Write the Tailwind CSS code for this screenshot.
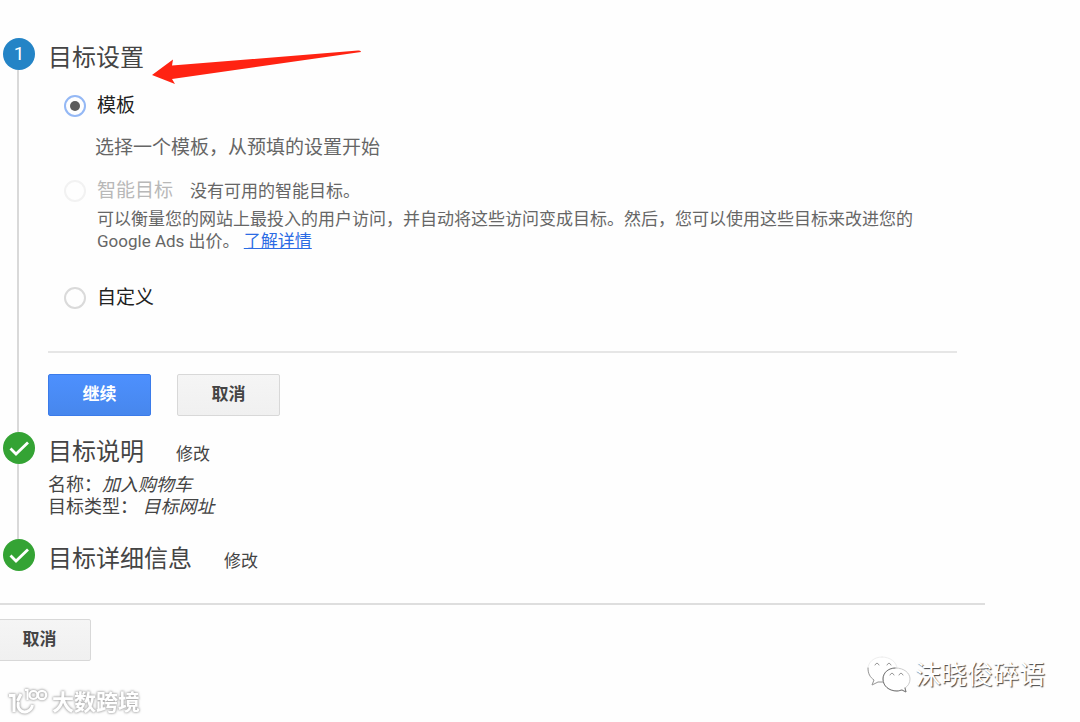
<!DOCTYPE html>
<html lang="zh-CN">
<head>
    <meta charset="UTF-8">
    <meta name="viewport" content="width=device-width, initial-scale=1.0">
    <title>目标设置</title>
    <script src="https://cdn.jsdelivr.net/npm/@tailwindcss/browser@4"></script>
</head>
<body class="relative min-h-screen overflow-x-hidden bg-[#fefefe] font-[Roboto,'Noto_Sans_CJK_SC',sans-serif] text-[#444]">
    <main class="max-w-[985px] pt-[38px]">

        <!-- Step 1 -->
        <section class="flex pr-7 pl-[3px]">
            <div class="flex w-[45px] shrink-0 flex-col">
                <span class="flex size-8 items-center justify-center rounded-full bg-[#2484c6] text-[19px] text-white">1</span>
                <span class="ml-[14px] w-[2px] grow bg-[#d9d9d9]"></span>
            </div>
            <div class="grow pb-4">
                <h2 class="text-2xl leading-10">目标设置</h2>
                <form>
                    <div class="mt-[14px] flex items-center gap-[11px] pl-4">
                        <input type="radio" name="goal" id="template" checked class="flex size-[22px] appearance-none items-center justify-center rounded-full border-2 border-[#94b8f5] before:size-[10px] before:rounded-full before:bg-[#5c5c5c] before:content-['']">
                        <label for="template" class="text-[19px] leading-7 text-[#222]">模板</label>
                    </div>
                    <p class="mt-[14px] pl-[47px] text-[19px] leading-7 text-[#666]">选择一个模板，从预填的设置开始</p>
                    <div class="mt-[15px] flex items-center gap-[11px] pl-4">
                        <input type="radio" name="goal" id="smart" disabled class="size-[22px] appearance-none rounded-full border-2 border-[#f2f2f2]">
                        <label for="smart" class="text-[19px] leading-7 text-[#b8b8b8]">智能目标</label>
                        <span class="pl-[6px] text-[17px] leading-7 text-[#666]">没有可用的智能目标。</span>
                    </div>
                    <p class="mt-[3px] pl-[49px] text-[17px] leading-[22px] text-[#666]">可以衡量您的网站上最投入的用户访问，并自动将这些访问变成目标。然后，您可以使用这些目标来改进您的 Google Ads 出价。 <a href="#" class="inline-block leading-[22px] text-[#2b6be4] underline">了解详情</a></p>
                    <div class="mt-8 flex items-center gap-[11px] pl-4">
                        <input type="radio" name="goal" id="custom" class="size-[22px] appearance-none rounded-full border-2 border-[#dadada]">
                        <label for="custom" class="text-[19px] leading-7 text-[#222]">自定义</label>
                    </div>
                    <hr class="mt-[39px] border-t-2 border-[#e6e6e6]">
                    <div class="mt-[21px] flex gap-[26px]">
                        <button type="submit" class="h-[42px] w-[103px] rounded-xs border border-[#3b7bea] bg-linear-to-b from-[#4d90fe] to-[#4787ed] text-[17px] font-bold text-white">继续</button>
                        <button type="button" class="h-[42px] w-[103px] rounded-xs border border-[#d8d8d8] bg-linear-to-b from-[#f5f5f5] to-[#f0f0f0] text-[17px] font-bold text-[#444]">取消</button>
                    </div>
                </form>
            </div>
        </section>

        <!-- Step 2 -->
        <section class="flex pr-7 pl-[3px]">
            <div class="flex w-[45px] shrink-0 flex-col">
                <svg class="size-8" viewBox="0 0 32 32" fill="none">
                    <circle cx="16" cy="16" r="16" fill="#34a334"/>
                    <path d="M7.5 16.5L13 22L25 10.5" stroke="#fff" stroke-width="2.8"/>
                </svg>
                <span class="ml-[14px] w-[2px] grow bg-[#d9d9d9]"></span>
            </div>
            <div class="grow pb-[21px]">
                <div class="flex items-baseline gap-8">
                    <h2 class="text-2xl leading-10">目标说明</h2>
                    <a href="#" class="text-[17px]">修改</a>
                </div>
                <div class="mt-[2px] text-[18px] leading-[22px]">
                    <p>名称：<em>加入购物车</em></p>
                    <p>目标类型： <em>目标网址</em></p>
                </div>
            </div>
        </section>

        <!-- Step 3 -->
        <section class="flex pr-7 pl-[3px]">
            <div class="w-[45px] shrink-0">
                <svg class="size-8" viewBox="0 0 32 32" fill="none">
                    <circle cx="16" cy="16" r="16" fill="#34a334"/>
                    <path d="M7.5 16.5L13 22L25 10.5" stroke="#fff" stroke-width="2.8"/>
                </svg>
            </div>
            <div class="flex grow items-baseline gap-8">
                <h2 class="text-2xl leading-10">目标详细信息</h2>
                <a href="#" class="text-[17px]">修改</a>
            </div>
        </section>

        <hr class="mt-6 border-t-2 border-[#dedede]">
        <button type="button" class="mt-[14px] -ml-3 h-[42px] w-[103px] rounded-xs border border-[#d8d8d8] bg-linear-to-b from-[#f5f5f5] to-[#f0f0f0] text-[17px] font-bold text-[#444]">取消</button>
    </main>

    <!-- Arrow pointing at the first heading -->
    <svg class="absolute top-[48px] left-[152px] w-[210px]" viewBox="0 0 210 38" fill="#ff2312">
        <path d="M0 27L21 11.500L20 17.500L206 2.500Q209 2 209 4L20 31L23 36Z"/>
    </svg>

    <!-- Watermarks -->
    <div class="absolute bottom-[3px] left-2 flex items-center gap-1 text-white [filter:drop-shadow(0_0_1px_#aaa)_drop-shadow(0_0_1px_#bbb)]">
        <svg class="h-8 w-10" viewBox="0 0 40 32" fill="none" stroke="#fff">
            <path d="M1 8.500H6V25M13 7L9.500 14M10.500 15C8.500 22 14 26.500 19 24.500C22.500 23 24 21 24.500 18" stroke-width="3"/>
            <path d="M17 3H19.500V13" stroke-width="2"/>
            <circle cx="25.500" cy="8" r="4" stroke-width="2.200"/>
            <circle cx="34" cy="8" r="4.200" stroke-width="2.200"/>
        </svg>
        <span class="text-[22px] leading-8 font-bold">大数跨境</span>
    </div>
    <div class="absolute right-[35px] bottom-[28px] flex items-center gap-1">
        <svg class="h-[38px] w-[44px]" viewBox="0 0 44 38" fill="#fff" stroke-width="1" stroke-linecap="round">
            <path d="M15 1C7 1 1 6 1 13C1 18 3 21 7 24L5 29L11 26C24 28 30 22 30 13C30 6 23 1 15 1Z" stroke="#eee"/>
            <path d="M1 12C1 18 3 21 7 24L5 29L11 26L16 26" stroke="#999" fill="none"/>
            <path d="M8 9Q10 5 12 9M20 9Q22 5 24 9" stroke="#999"/>
            <path d="M29 12C21 12 16 17 16 23C16 30 22 35 30 35C32 35 34 34 35 34L39 36L38 32C41 30 43 27 43 23C43 17 37 12 29 12Z" stroke="#ccc"/>
            <path d="M28 12C21 12 16 17 16 23C16 30 22 35 30 35C32 35 34 34 35 34L39 36L38 32" stroke="#777" fill="none"/>
            <path d="M23 19Q25 15 27 19M32 19Q34 15 36 19" stroke="#999"/>
        </svg>
        <span class="text-[26px] leading-9 text-white [text-shadow:1px_1px_1px_#444]">沫晓俊碎语</span>
    </div>
</body>
</html>
